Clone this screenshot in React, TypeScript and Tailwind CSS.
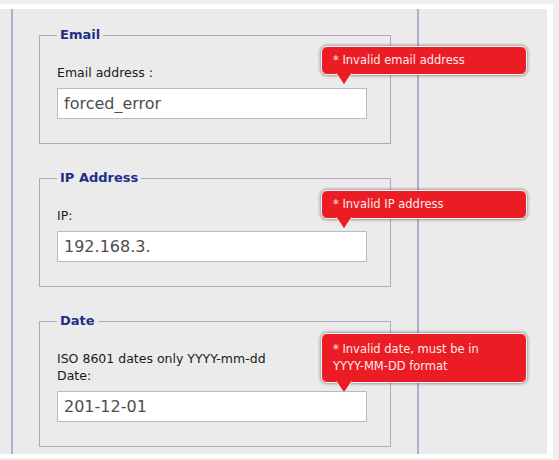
import React from 'react'

interface ErrorTip {
  lines: string[]
  gap: number
}

interface Field {
  legend: string
  labels: string[]
  value: string
  error: ErrorTip
}

const fields: Field[] = [
  {
    legend: 'Email',
    labels: ['Email address :'],
    value: 'forced_error',
    error: { lines: ['* Invalid email address'], gap: 13 },
  },
  {
    legend: 'IP Address',
    labels: ['IP:'],
    value: '192.168.3.',
    error: { lines: ['* Invalid IP address'], gap: 12 },
  },
  {
    legend: 'Date',
    labels: ['ISO 8601 dates only YYYY-mm-dd', 'Date:'],
    value: '201-12-01',
    error: { lines: ['* Invalid date, must be in', 'YYYY-MM-DD format'], gap: 8 },
  },
]

function Tooltip({ error }: { error: ErrorTip }) {
  const multi = error.lines.length > 1
  return (
    <div
      className="absolute left-[264px] w-[206px] z-10"
      style={{ bottom: `calc(100% + ${error.gap}px)` }}
    >
      <div
        className={`relative rounded-[6px] border border-[#f4f4f4] bg-[#ec1c24] pl-[11px] pr-2 text-[11.5px] leading-[17px] text-[#fdeaea] shadow-[0_0_3px_1px_rgba(0,0,0,0.35)] ${
          multi ? 'py-[7px]' : 'py-[5px]'
        }`}
      >
        {error.lines.map(line => (
          <div key={line} className="whitespace-nowrap">{line}</div>
        ))}
        {/* Arrow */}
        <svg
          className="absolute left-[13px] top-[calc(100%-1px)]"
          width="18"
          height="14"
          viewBox="0 0 18 14"
        >
          <polygon points="1,0 17,0 9,12" fill="#ec1c24" stroke="#f4f4f4" strokeWidth="1" />
          <rect x="1.5" y="0" width="15" height="1.2" fill="#ec1c24" />
        </svg>
      </div>
    </div>
  )
}

export default function App() {
  return (
    <div
      className="h-[460px] w-[559px] overflow-hidden bg-[#efefef] pt-[4px]"
      style={{ fontFamily: '"DejaVu Sans", Verdana, sans-serif' }}
    >
      <div className="flex h-[454px] w-[553px] border-t-[5px] border-r-[6px] border-b-[4px] border-white bg-[#ebebeb]">
        {/* Left gutter */}
        <div className="w-[11px] shrink-0" />

        {/* Form column */}
        <div className="w-[408px] shrink-0 border-l-2 border-r-2 border-[#aeb0c9] pl-[26px] pt-[18px]">
          <div className="flex flex-col gap-[26px]">
            {fields.map(field => (
              <fieldset
                key={field.legend}
                className="w-[352px] border border-[#a9abc3] pl-[17px] pr-[22px] pt-[21px] pb-[24px]"
              >
                <legend className="px-[3px] text-[13px] font-bold leading-[16px] text-[#1d2f88]">
                  {field.legend}
                </legend>
                {field.labels.map(label => (
                  <div key={label} className="text-[12.5px] leading-[17px] text-[#1a1a1a]">
                    {label}
                  </div>
                ))}
                <div className="relative mt-[7px]">
                  <input
                    type="text"
                    defaultValue={field.value}
                    className="block h-[31px] w-[310px] border border-[#b6b8cc] bg-white pl-[6px] text-[16px] text-[#4d4d4d] outline-none"
                  />
                  <Tooltip error={field.error} />
                </div>
              </fieldset>
            ))}
          </div>
        </div>

        {/* Right area */}
        <div className="flex-1" />
      </div>
    </div>
  )
}
